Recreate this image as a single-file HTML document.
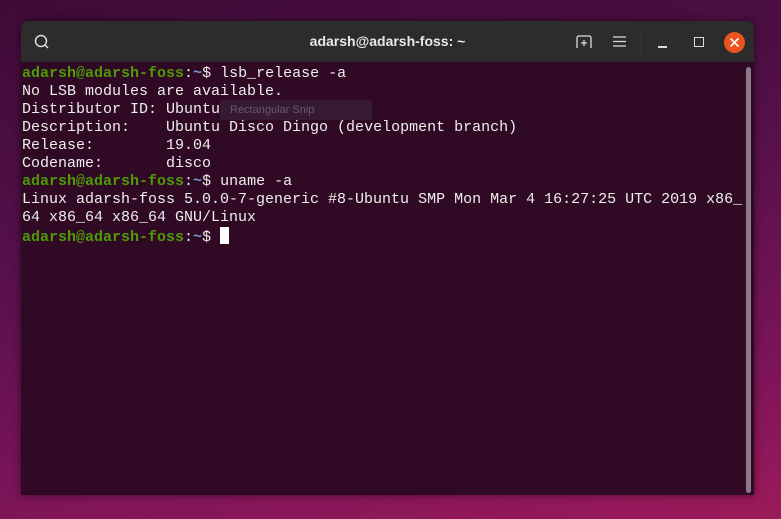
<!DOCTYPE html>
<html><head><style>
html,body{margin:0;padding:0}
body{width:781px;height:519px;overflow:hidden;position:relative;
background:linear-gradient(170deg,#3e0b36 0%,#55104a 40%,#7a1458 75%,#9c1a5a 100%);}
.win{position:absolute;left:21px;top:21px;width:733px;height:474px;background:#300a24;border-radius:7px 7px 0 0;overflow:hidden;box-shadow:0 0 8px rgba(0,0,0,.5)}
.tb{height:41px;background:#2c2c2c;position:relative;color:#e8e8e8;font:bold 14px "Liberation Sans",sans-serif}
.title{position:absolute;left:0;right:0;top:12px;text-align:center;padding-left:0}
.term{position:absolute;left:1px;top:44px;font:15px/18px "Liberation Mono",monospace;color:#eeeeec;white-space:pre}
.g{color:#4e9a06;font-weight:bold}.b{color:#729fcf;font-weight:bold}
.cur{display:inline-block;width:9px;height:17px;background:#fff;vertical-align:-3px}
.snip{position:absolute;left:199px;top:79px;width:152px;height:20px;background:rgba(60,40,60,.55);color:#6a5a68;font:11px "Liberation Sans",sans-serif;line-height:20px;padding-left:10px;box-sizing:border-box}
.sb{position:absolute;left:725px;top:46px;width:5px;height:426px;background:#8a7a88;border-radius:3px}
</style></head><body>
<div class="win">
<div class="tb">
<svg style="position:absolute;left:13px;top:13px" width="16" height="16"><circle cx="7" cy="7" r="5.5" fill="none" stroke="#ddd" stroke-width="1.5"/><line x1="11" y1="11" x2="14" y2="14" stroke="#ddd" stroke-width="1.5"/></svg>
<div class="title">adarsh@adarsh-foss: ~</div>
<svg style="position:absolute;left:555px;top:14px" width="16" height="14"><path d="M1 13V3Q1 1 3 1H13Q15 1 15 3V13" fill="none" stroke="#ddd" stroke-width="1.3"/><path d="M8 5V11M5 8H11" stroke="#ddd" stroke-width="1.3"/></svg>
<svg style="position:absolute;left:592px;top:15px" width="13" height="11"><path d="M0 1H13M0 5.5H13M0 10H13" stroke="#ddd" stroke-width="1.3"/></svg>
<div style="position:absolute;left:620px;top:8px;width:1px;height:26px;background:#3a3a3a"></div>
<div style="position:absolute;left:637px;top:25px;width:9px;height:1.5px;background:#ddd"></div>
<div style="position:absolute;left:673px;top:16px;width:8px;height:8px;border:1.5px solid #ddd"></div>
<div style="position:absolute;left:703px;top:11px;width:21px;height:21px;border-radius:50%;background:#e95420"></div>
<svg style="position:absolute;left:708px;top:16px" width="11" height="11"><path d="M1.5 1.5L9.5 9.5M9.5 1.5L1.5 9.5" stroke="#fff" stroke-width="1.6"/></svg>
</div>
<div class="snip">Rectangular Snip</div>
<div class="term"><span class="g">adarsh@adarsh-foss</span>:<span class="b">~</span>$ lsb_release -a
No LSB modules are available.
Distributor ID:	Ubuntu
Description:	Ubuntu Disco Dingo (development branch)
Release:	19.04
Codename:	disco
<span class="g">adarsh@adarsh-foss</span>:<span class="b">~</span>$ uname -a
Linux adarsh-foss 5.0.0-7-generic #8-Ubuntu SMP Mon Mar 4 16:27:25 UTC 2019 x86_
64 x86_64 x86_64 GNU/Linux
<span class="g">adarsh@adarsh-foss</span>:<span class="b">~</span>$ <span class="cur"></span></div>
<div class="sb"></div>
</div>
</body></html>
